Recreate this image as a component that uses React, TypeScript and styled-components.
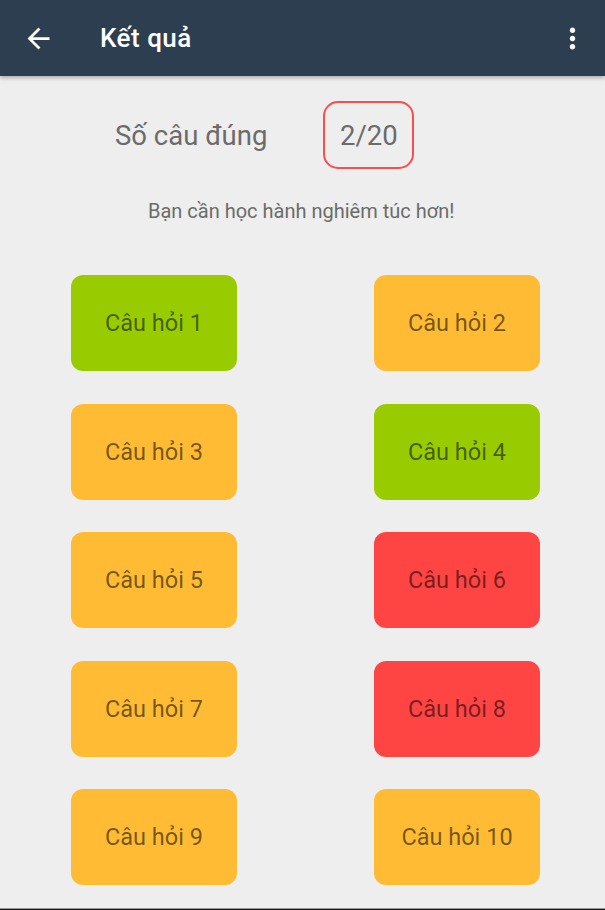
import React from "react";
import styled, { createGlobalStyle } from "styled-components";

const GlobalStyle = createGlobalStyle`
  html, body {
    margin: 0;
    padding: 0;
    background: #eeeeee;
  }
  body {
    font-family: Roboto, "Noto Sans", "Liberation Sans", sans-serif;
    -webkit-font-smoothing: antialiased;
  }
  * { box-sizing: border-box; }
`;

const Page = styled.div`
  width: 605px;
  height: 910px;
  display: flex;
  flex-direction: column;
  background: #eeeeee;
  overflow: hidden;
`;

const AppBar = styled.header`
  position: relative;
  z-index: 1;
  height: 76px;
  flex: 0 0 76px;
  display: flex;
  align-items: center;
  background: #2d3e50;
  box-shadow: 0 2px 4px rgba(0, 0, 0, 0.28);
  padding: 0 16px 0 22px;
`;

const IconButton = styled.button`
  width: 33px;
  height: 33px;
  padding: 0;
  border: none;
  background: transparent;
  display: flex;
  align-items: center;
  justify-content: center;
  color: #ffffff;
`;

const Title = styled.h1`
  margin: 0 0 0 45px;
  flex: 1;
  font-family: Roboto, "Noto Sans", sans-serif;
  font-weight: 500;
  font-size: 26px;
  letter-spacing: 0.5px;
  color: #ffffff;
`;

const Content = styled.main`
  flex: 1;
  display: flex;
  flex-direction: column;
`;

const ScoreRow = styled.div`
  margin-top: 25px;
  padding-left: 115px;
  display: flex;
  align-items: center;
  gap: 56px;
`;

const ScoreLabel = styled.span`
  font-size: 27.5px;
  color: #6b6b6b;
`;

const ScoreBox = styled.div`
  width: 91px;
  height: 68px;
  border: 2.5px solid #ff4b4b;
  border-radius: 15px;
  display: flex;
  align-items: center;
  justify-content: center;
  font-size: 27.5px;
  color: #6b6b6b;
`;

const Message = styled.p`
  margin: 30px 0 0 148px;
  font-size: 20px;
  line-height: 24px;
  color: #6b6b6b;
`;

const Grid = styled.div`
  margin-top: 52px;
  padding-left: 71px;
  display: grid;
  grid-template-columns: 166px 166px;
  column-gap: 137px;
  row-gap: 32.5px;
`;

const statusColors = {
  correct: "#99cc00",
  skipped: "#ffbb33",
  wrong: "#ff4444",
} as const;

type Status = keyof typeof statusColors;

const QuestionTile = styled.button<{ $status: Status }>`
  height: 96px;
  border: none;
  border-radius: 12px;
  background: ${(p) => statusColors[p.$status]};
  color: rgba(0, 0, 0, 0.55);
  font-family: Roboto, "Noto Sans", sans-serif;
  font-size: 23.5px;
  display: flex;
  align-items: center;
  justify-content: center;
  padding: 0;
`;

const BottomEdge = styled.div`
  flex: 0 0 2px;
  background: linear-gradient(#9a9a9a 50%, #151515 50%);
`;

const questions: Status[] = [
  "correct",
  "skipped",
  "skipped",
  "correct",
  "skipped",
  "wrong",
  "skipped",
  "wrong",
  "skipped",
  "skipped",
];

export default function App() {
  return (
    <>
      <GlobalStyle />
      <Page>
        <AppBar>
          <IconButton aria-label="back">
            <svg width="33" height="33" viewBox="0 0 24 24" fill="currentColor">
              <path d="M20 11H7.83l5.59-5.59L12 4l-8 8 8 8 1.41-1.41L7.83 13H20v-2z" />
            </svg>
          </IconButton>
          <Title>Kết quả</Title>
          <IconButton aria-label="more">
            <svg width="33" height="33" viewBox="0 0 24 24" fill="currentColor">
              <path d="M12 8c1.1 0 2-.9 2-2s-.9-2-2-2-2 .9-2 2 .9 2 2 2zm0 2c-1.1 0-2 .9-2 2s.9 2 2 2 2-.9 2-2-.9-2-2-2zm0 6c-1.1 0-2 .9-2 2s.9 2 2 2 2-.9 2-2-.9-2-2-2z" />
            </svg>
          </IconButton>
        </AppBar>
        <Content>
          <ScoreRow>
            <ScoreLabel>Số câu đúng</ScoreLabel>
            <ScoreBox>2/20</ScoreBox>
          </ScoreRow>
          <Message>Bạn cần học hành nghiêm túc hơn!</Message>
          <Grid>
            {questions.map((s, i) => (
              <QuestionTile key={i} $status={s}>
                Câu hỏi {i + 1}
              </QuestionTile>
            ))}
          </Grid>
        </Content>
        <BottomEdge />
      </Page>
    </>
  );
}
